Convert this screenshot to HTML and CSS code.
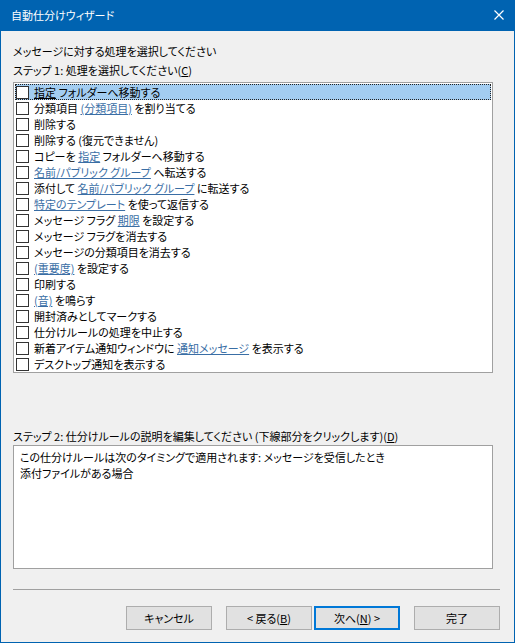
FILE: index.html
```html
<!DOCTYPE html>
<html lang="ja">
<head>
    <meta charset="UTF-8">
    <title>自動仕分けウィザード</title>
    <link rel="stylesheet" href="styles.css">
</head>
<body>
    <div class="window">
        <div class="titlebar">
            <span class="title">自動仕分けウィザード</span>
            <span class="close">
                <svg width="10" height="10" viewBox="0 0 10 10">
                    <path d="M0.5 0.5 L9.5 9.5 M9.5 0.5 L0.5 9.5" stroke="#fff" stroke-width="1.2" fill="none"/>
                </svg>
            </span>
        </div>

        <div class="content">
            <div class="label">メッセージに対する処理を選択してください</div>
            <div class="label">ステップ 1: 処理を選択してください(<u>C</u>)</div>

            <ul class="actions">
                <li class="selected"><span class="check"></span><span><a>指定</a> フォルダーへ移動する</span></li>
                <li><span class="check"></span><span>分類項目 <a class="link">(分類項目)</a> を割り当てる</span></li>
                <li><span class="check"></span><span>削除する</span></li>
                <li><span class="check"></span><span>削除する (復元できません)</span></li>
                <li><span class="check"></span><span>コピーを <a class="link">指定</a> フォルダーへ移動する</span></li>
                <li><span class="check"></span><span><a class="link">名前/パブリック グループ</a> へ転送する</span></li>
                <li><span class="check"></span><span>添付して <a class="link">名前/パブリック グループ</a> に転送する</span></li>
                <li><span class="check"></span><span><a class="link">特定のテンプレート</a> を使って返信する</span></li>
                <li><span class="check"></span><span>メッセージ フラグ <a class="link">期限</a> を設定する</span></li>
                <li><span class="check"></span><span>メッセージ フラグを消去する</span></li>
                <li><span class="check"></span><span>メッセージの分類項目を消去する</span></li>
                <li><span class="check"></span><span><a class="link">(重要度)</a> を設定する</span></li>
                <li><span class="check"></span><span>印刷する</span></li>
                <li><span class="check"></span><span><a class="link">(音)</a> を鳴らす</span></li>
                <li><span class="check"></span><span>開封済みとしてマークする</span></li>
                <li><span class="check"></span><span>仕分けルールの処理を中止する</span></li>
                <li><span class="check"></span><span>新着アイテム通知ウィンドウに <a class="link">通知メッセージ</a> を表示する</span></li>
                <li><span class="check"></span><span>デスクトップ通知を表示する</span></li>
            </ul>

            <div class="label step2">ステップ 2: 仕分けルールの説明を編集してください (下線部分をクリックします)(<u>D</u>)</div>
            <div class="description">
                <div>この仕分けルールは次のタイミングで適用されます: メッセージを受信したとき</div>
                <div>添付ファイルがある場合</div>
            </div>

            <hr class="separator">

            <div class="buttons">
                <button>キャンセル</button>
                <button class="back">&lt; 戻る(<u>B</u>)</button>
                <button class="default">次へ(<u>N</u>) &gt;</button>
                <button class="finish">完了</button>
            </div>
        </div>
    </div>
</body>
</html>
```

FILE: styles.css
```css
* {
    box-sizing: border-box;
}

body {
    margin: 0;
    font-family: "Noto Sans CJK JP", "Noto Sans", sans-serif;
    font-size: 11px;
    font-feature-settings: "palt";
    color: #000;
}

.window {
    width: 515px;
    height: 643px;
    border: 1px solid #0063b1;
    border-top: none;
    background: #f0f0f0;
}

.titlebar {
    height: 31px;
    margin: 0 -1px;
    background: #0063b1;
    color: #fff;
    display: flex;
    align-items: center;
    justify-content: space-between;
    padding: 0 11px 1px 11px;
}

.close {
    display: flex;
}

.content {
    padding: 12px 21px 0 12px;
}

.label {
    line-height: 16px;
    height: 19px;
}

.actions {
    list-style: none;
    margin: 1px 0 0;
    padding: 1px;
    background: #fff;
    border: 1px solid #a0a0a0;
    height: 291px;
}

.actions li {
    height: 16px;
    line-height: 16px;
    display: flex;
    align-items: center;
    white-space: nowrap;
}

.actions li.selected {
    background: #a3cdf1;
    outline: 1px dotted #222;
    outline-offset: -1px;
}

.check {
    width: 13px;
    height: 13px;
    border: 1px solid #333;
    background: #fff;
    margin: 0 5px 0 1px;
    flex-shrink: 0;
}

.actions a {
    text-decoration: underline;
}

.link {
    color: #3a6ea5;
}

.step2 {
    margin-top: 55px;
    height: 17px;
}

.description {
    height: 124px;
    background: #fff;
    border: 1px solid #a0a0a0;
    padding: 3px 6px;
    line-height: 16px;
}

.separator {
    border: none;
    border-top: 1px solid #a0a0a0;
    margin: 20px -7px 0 0;
    height: 0;
}

.buttons {
    display: flex;
    justify-content: flex-end;
    margin: 16px -7px 0 0;
}

.buttons button {
    width: 86px;
    height: 24px;
    background: #e1e1e1;
    border: 1px solid #adadad;
    font-family: inherit;
    font-size: 11px;
    font-feature-settings: "palt";
    color: #000;
    padding: 0;
}

.buttons .back {
    margin-left: 14px;
}

.buttons .default {
    margin-left: 2px;
    border: 2px solid #0078d7;
}

.buttons .finish {
    margin-left: 14px;
}
```
